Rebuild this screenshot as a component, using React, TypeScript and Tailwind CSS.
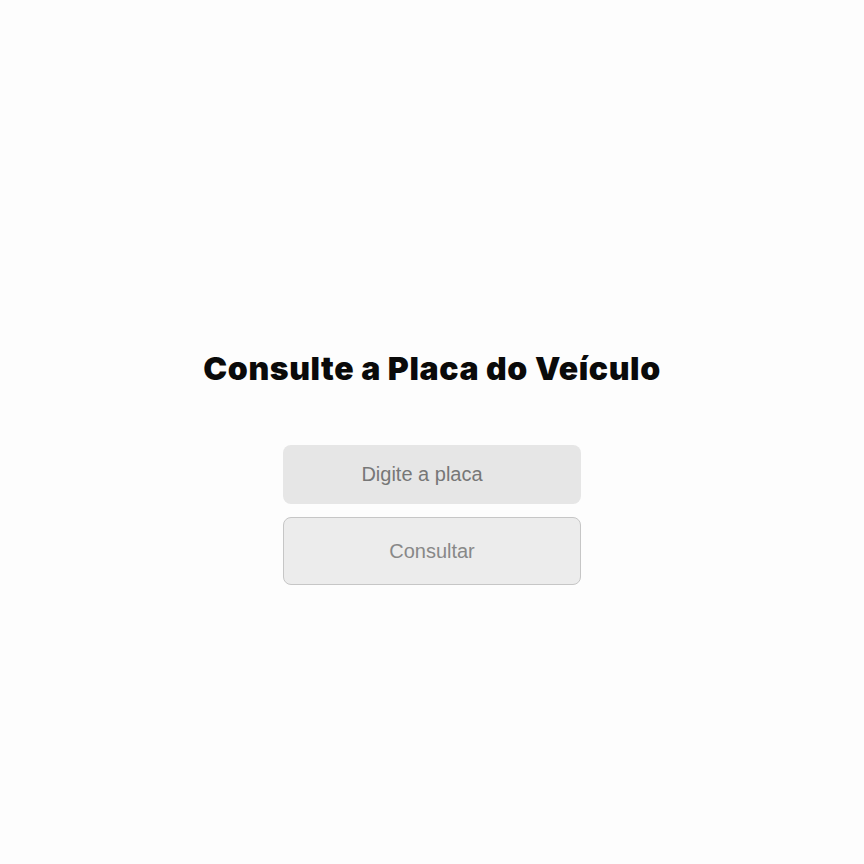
export default function App() {
  return (
    <div className="min-h-screen w-full bg-[#fdfdfd] flex flex-col items-center pt-[348px]">
      <h1 className="font-['Inter','Noto_Sans',sans-serif] text-[32px] leading-[42px] font-black text-[#0a0a0a] tracking-[0.6px]">
        Consulte a Placa do Veículo
      </h1>
      <form
        className="mt-[55px] flex flex-col gap-[13px] w-[298px]"
        onSubmit={(e) => e.preventDefault()}
      >
        <input
          type="text"
          placeholder="Digite a placa"
          className="font-['Liberation_Sans',Arial,sans-serif] h-[59px] w-full rounded-lg bg-[#e6e6e6] pr-5 text-center text-[20px] text-[#444] placeholder:text-[#777] outline-none"
        />
        <button
          type="submit"
          className="font-['Liberation_Sans',Arial,sans-serif] h-[68px] w-full rounded-lg border border-[#c6c6c6] bg-[#ececec] text-[20px] text-[#888]"
        >
          Consultar
        </button>
      </form>
    </div>
  );
}
